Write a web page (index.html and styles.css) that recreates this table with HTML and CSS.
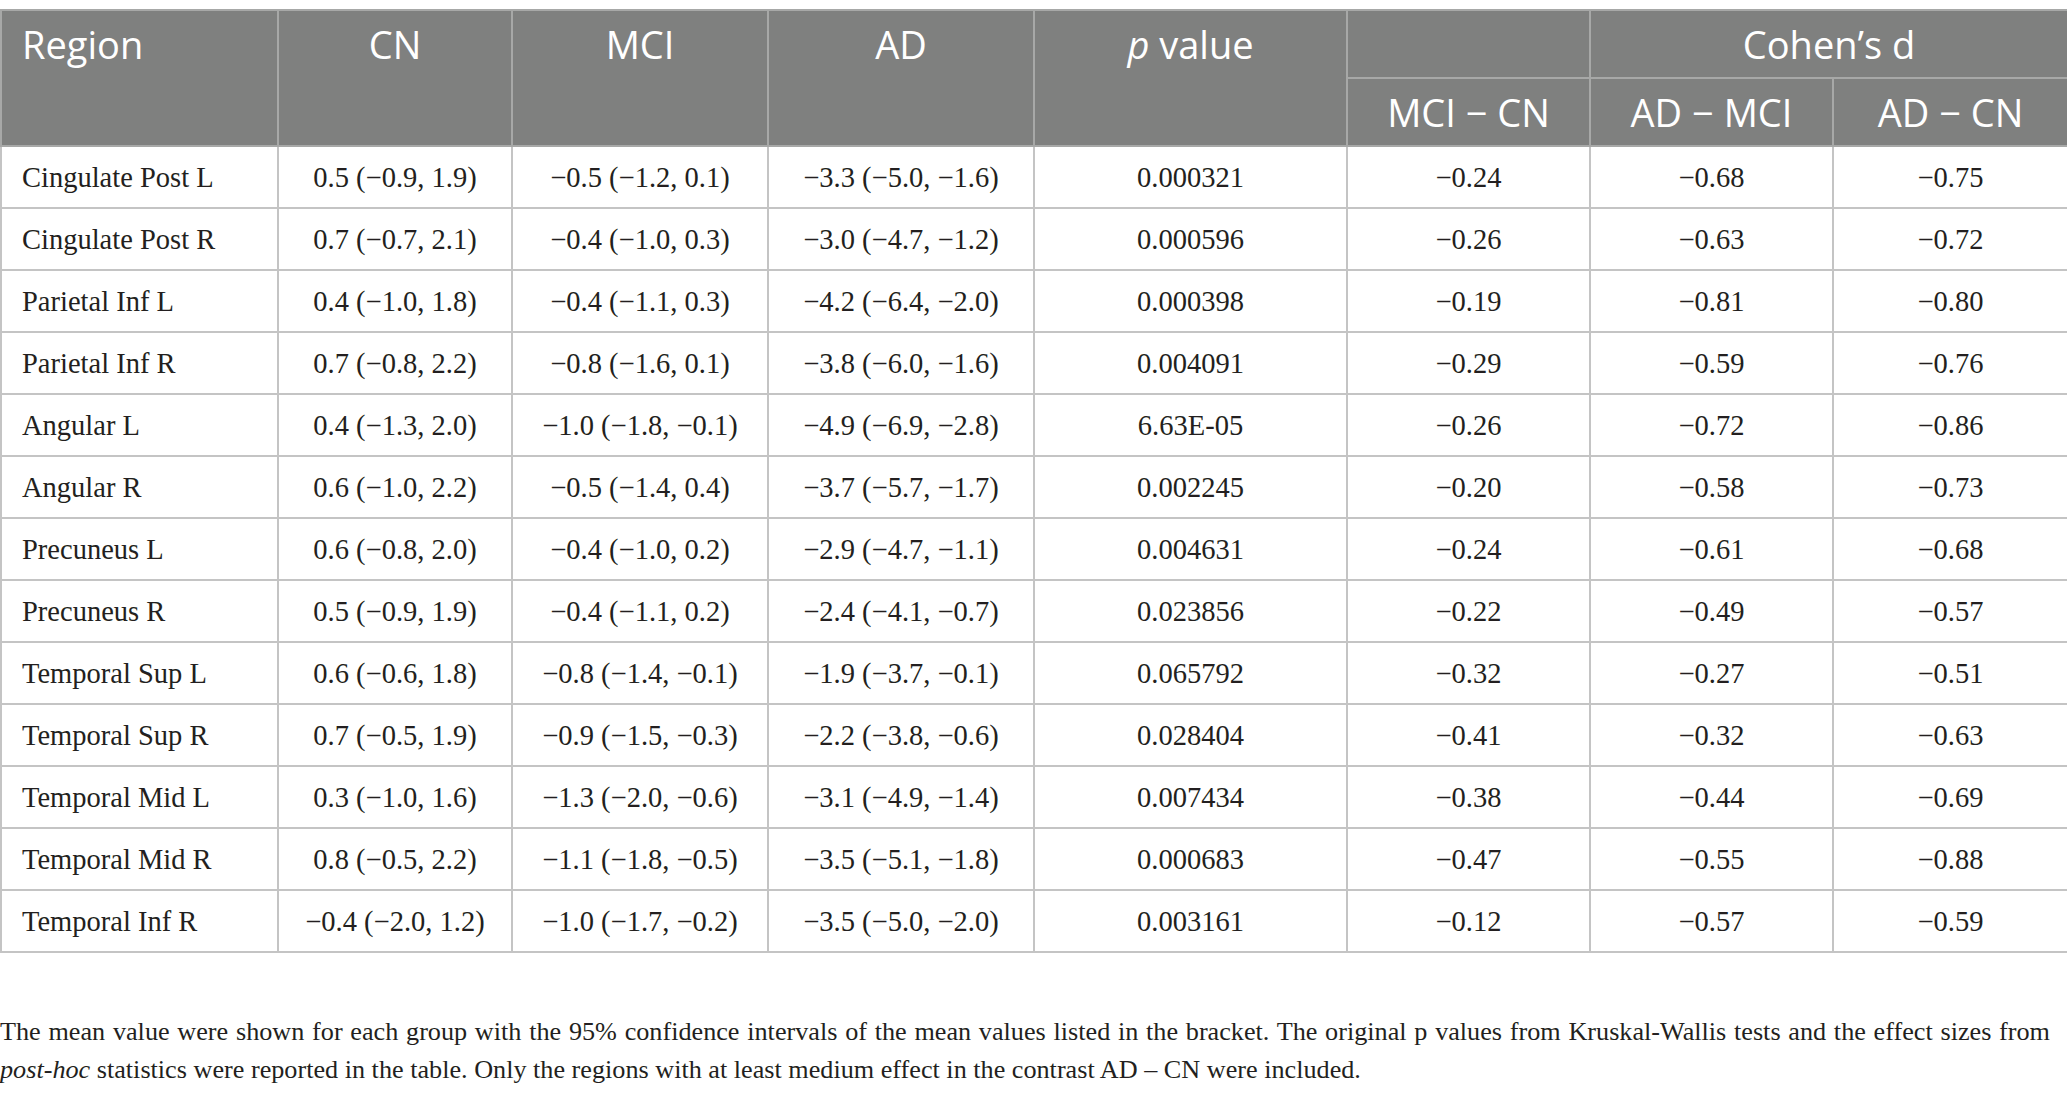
FILE: index.html
```
<!DOCTYPE html>
<html lang="en">
<head>
    <meta charset="UTF-8">
    <meta name="viewport" content="width=device-width, initial-scale=1.0">
    <title>Table</title>
<link rel="stylesheet" href="styles.css">
</head>
<body>
    <table class="stats">
        <colgroup>
            <col class="c-region">
            <col class="c-cn">
            <col class="c-mci">
            <col class="c-ad">
            <col class="c-p">
            <col class="c-d1">
            <col class="c-d2">
            <col class="c-d3">
        </colgroup>
        <thead>
            <tr class="head-top">
                <th rowspan="2" class="left">Region</th>
                <th rowspan="2">CN</th>
                <th rowspan="2">MCI</th>
                <th rowspan="2">AD</th>
                <th rowspan="2"><i>p</i> value</th>
                <th></th>
                <th colspan="2">Cohen’s d</th>
            </tr>
            <tr class="head-sub">
                <th>MCI − CN</th>
                <th>AD − MCI</th>
                <th>AD − CN</th>
            </tr>
        </thead>
        <tbody>
            <tr><td class="left">Cingulate Post L</td><td>0.5 (−0.9, 1.9)</td><td>−0.5 (−1.2, 0.1)</td><td>−3.3 (−5.0, −1.6)</td><td>0.000321</td><td>−0.24</td><td>−0.68</td><td>−0.75</td></tr>
            <tr><td class="left">Cingulate Post R</td><td>0.7 (−0.7, 2.1)</td><td>−0.4 (−1.0, 0.3)</td><td>−3.0 (−4.7, −1.2)</td><td>0.000596</td><td>−0.26</td><td>−0.63</td><td>−0.72</td></tr>
            <tr><td class="left">Parietal Inf L</td><td>0.4 (−1.0, 1.8)</td><td>−0.4 (−1.1, 0.3)</td><td>−4.2 (−6.4, −2.0)</td><td>0.000398</td><td>−0.19</td><td>−0.81</td><td>−0.80</td></tr>
            <tr><td class="left">Parietal Inf R</td><td>0.7 (−0.8, 2.2)</td><td>−0.8 (−1.6, 0.1)</td><td>−3.8 (−6.0, −1.6)</td><td>0.004091</td><td>−0.29</td><td>−0.59</td><td>−0.76</td></tr>
            <tr><td class="left">Angular L</td><td>0.4 (−1.3, 2.0)</td><td>−1.0 (−1.8, −0.1)</td><td>−4.9 (−6.9, −2.8)</td><td>6.63E-05</td><td>−0.26</td><td>−0.72</td><td>−0.86</td></tr>
            <tr><td class="left">Angular R</td><td>0.6 (−1.0, 2.2)</td><td>−0.5 (−1.4, 0.4)</td><td>−3.7 (−5.7, −1.7)</td><td>0.002245</td><td>−0.20</td><td>−0.58</td><td>−0.73</td></tr>
            <tr><td class="left">Precuneus L</td><td>0.6 (−0.8, 2.0)</td><td>−0.4 (−1.0, 0.2)</td><td>−2.9 (−4.7, −1.1)</td><td>0.004631</td><td>−0.24</td><td>−0.61</td><td>−0.68</td></tr>
            <tr><td class="left">Precuneus R</td><td>0.5 (−0.9, 1.9)</td><td>−0.4 (−1.1, 0.2)</td><td>−2.4 (−4.1, −0.7)</td><td>0.023856</td><td>−0.22</td><td>−0.49</td><td>−0.57</td></tr>
            <tr><td class="left">Temporal Sup L</td><td>0.6 (−0.6, 1.8)</td><td>−0.8 (−1.4, −0.1)</td><td>−1.9 (−3.7, −0.1)</td><td>0.065792</td><td>−0.32</td><td>−0.27</td><td>−0.51</td></tr>
            <tr><td class="left">Temporal Sup R</td><td>0.7 (−0.5, 1.9)</td><td>−0.9 (−1.5, −0.3)</td><td>−2.2 (−3.8, −0.6)</td><td>0.028404</td><td>−0.41</td><td>−0.32</td><td>−0.63</td></tr>
            <tr><td class="left">Temporal Mid L</td><td>0.3 (−1.0, 1.6)</td><td>−1.3 (−2.0, −0.6)</td><td>−3.1 (−4.9, −1.4)</td><td>0.007434</td><td>−0.38</td><td>−0.44</td><td>−0.69</td></tr>
            <tr><td class="left">Temporal Mid R</td><td>0.8 (−0.5, 2.2)</td><td>−1.1 (−1.8, −0.5)</td><td>−3.5 (−5.1, −1.8)</td><td>0.000683</td><td>−0.47</td><td>−0.55</td><td>−0.88</td></tr>
            <tr><td class="left">Temporal Inf R</td><td>−0.4 (−2.0, 1.2)</td><td>−1.0 (−1.7, −0.2)</td><td>−3.5 (−5.0, −2.0)</td><td>0.003161</td><td>−0.12</td><td>−0.57</td><td>−0.59</td></tr>
        </tbody>
    </table>

    <p class="caption">The mean value were shown for each group with the 95% confidence intervals of the mean values listed in the bracket. The original p values from Kruskal-Wallis tests and the effect sizes from <i class="nowrap">post-hoc</i> statistics were reported in the table. Only the regions with at least medium effect in the contrast AD – CN were included.</p>
</body>
</html>
```

FILE: styles.css
```
body {
    margin: 0;
    background: #fff;
    color: #231f20;
    font-family: "Liberation Serif", "Times New Roman", serif;
}

.stats {
    margin-top: 9px;
    width: 2067px;
    table-layout: fixed;
    border-collapse: collapse;
    border: 2px solid #c4c4c4;
}

.c-region { width: 277px; }
.c-cn { width: 234px; }
.c-mci { width: 256px; }
.c-ad { width: 266px; }
.c-p { width: 313px; }
.c-d1 { width: 243px; }
.c-d2 { width: 243px; }
.c-d3 { width: 235px; }

.stats th {
    background-color: #7f807f;
    color: #fff;
    font-family: "Open Sans", "Noto Sans", sans-serif;
    font-weight: normal;
    font-size: 38px;
    border: 2px solid #a7a8a7;
    padding: 0 20px;
    text-align: center;
    vertical-align: top;
    line-height: 66px;
}

.head-top,
.head-sub {
    height: 68px;
}

.stats th i {
    font-style: italic;
}

.stats td {
    border: 2px solid #c4c4c4;
    font-size: 28.5px;
    text-align: center;
    vertical-align: middle;
    padding: 2px 20px 0;
    height: 58px;
}

.stats .left {
    text-align: left;
}

.caption {
    margin: 60px 17px 0 0;
    font-size: 26.2px;
    line-height: 38px;
    text-align: justify;
}

.nowrap {
    white-space: nowrap;
}
```
